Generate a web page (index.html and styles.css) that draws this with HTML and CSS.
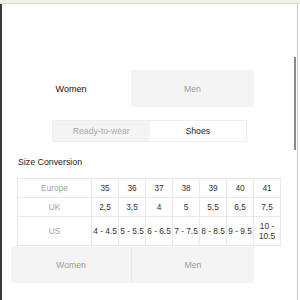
FILE: index.html
```html
<!DOCTYPE html>
<html>
<head>
<meta charset="utf-8">
<link rel="stylesheet" href="styles.css">
</head>
<body>
<div class="topbar"></div>
<div class="window">
  <div class="content">
    <div class="tabs">
      <div class="tab active">Women</div>
      <div class="tab">Men</div>
    </div>
    <div class="seg">
      <div class="seg-item">Ready-to-wear</div>
      <div class="seg-item active">Shoes</div>
    </div>
    <div class="title">Size Conversion</div>
    <table class="sizes">
      <colgroup>
        <col class="c-label"><col class="c-num"><col class="c-num"><col class="c-num"><col class="c-num"><col class="c-num"><col class="c-num"><col class="c-num">
      </colgroup>
      <tr class="r1"><td class="lbl">Europe</td><td>35</td><td>36</td><td>37</td><td>38</td><td>39</td><td>40</td><td>41</td></tr>
      <tr class="r1"><td class="lbl">UK</td><td>2,5</td><td>3,5</td><td>4</td><td>5</td><td>5,5</td><td>6,5</td><td>7,5</td></tr>
      <tr class="r3"><td class="lbl">US</td><td>4 - 4.5</td><td>5 - 5.5</td><td>6 - 6.5</td><td>7 - 7.5</td><td>8 - 8.5</td><td>9 - 9.5</td><td>10 - 10.5</td></tr>
    </table>
  </div>
  <div class="bottom-tabs">
    <div class="tab">Women</div>
    <div class="tab">Men</div>
  </div>
  <div class="thumb"></div>
</div>
</body>
</html>
```

FILE: styles.css
```css
html, body {
  margin: 0;
  padding: 0;
  background: #fff;
}
body {
  width: 300px;
  height: 300px;
  overflow: hidden;
  font-family: "Liberation Sans", Arial, sans-serif;
}
.topbar {
  height: 3px;
  background: #f2eee8;
  border-bottom: 1px solid #dcd8d2;
}
.window {
  position: relative;
  width: 295px;
  height: 296px;
  overflow: hidden;
  border-left: 2px solid #3a3a3a;
  border-right: 1px solid #c4c4c4;
  box-sizing: content-box;
}
.content {
  padding-top: 66px;
  padding-left: 15px;
  width: 263px;
}
.tabs {
  display: flex;
  width: 243px;
  height: 37px;
  margin-left: -6px;
}
.tab {
  flex: 1 1 0;
  display: flex;
  align-items: center;
  justify-content: center;
  font-size: 8.7px;
  color: #9a9a9a;
  background: #f4f4f4;
}
.tabs .tab:first-child {
  flex: 0 0 120px;
}
.tab.active {
  background: #fff;
  color: #111;
  font-size: 9px;
}
.seg {
  display: flex;
  width: 193px;
  height: 20px;
  margin: 13px auto 0;
  border: 1px solid #eeeeee;
  border-radius: 2px;
  position: relative;
  left: 1px;
}
.seg-item {
  flex: 1 1 0;
  display: flex;
  align-items: center;
  justify-content: center;
  font-size: 8.7px;
  color: #aaaaaa;
  background: #f4f4f4;
}
.seg-item.active {
  background: #fff;
  color: #1e1e1e;
}
.title {
  margin-top: 14px;
  margin-left: 1px;
  font-size: 8.8px;
  line-height: 12px;
  color: #222;
}
.sizes {
  margin-top: 10px;
  border-collapse: collapse;
  table-layout: fixed;
  width: 263px;
}
.c-label { width: 74px; }
.c-num { width: 27px; }
.sizes td {
  border: 1px solid #e9e9e9;
  padding: 0;
  text-align: center;
  font-size: 8.3px;
  line-height: 10px;
  color: #333;
}
.sizes td.lbl {
  color: #a0a0a0;
}
.r1 td { height: 18px; }
.r3 td { height: 28px; }
.bottom-tabs {
  position: absolute;
  left: 9px;
  top: 243px;
  width: 243px;
  height: 36px;
  display: flex;
}
.bottom-tabs .tab:first-child {
  flex: 0 0 120px;
  border-right: 1px solid #e8e8e8;
}
.thumb {
  position: absolute;
  right: 1px;
  top: 53px;
  width: 2px;
  height: 93px;
  background: #8a8a8a;
}
```
